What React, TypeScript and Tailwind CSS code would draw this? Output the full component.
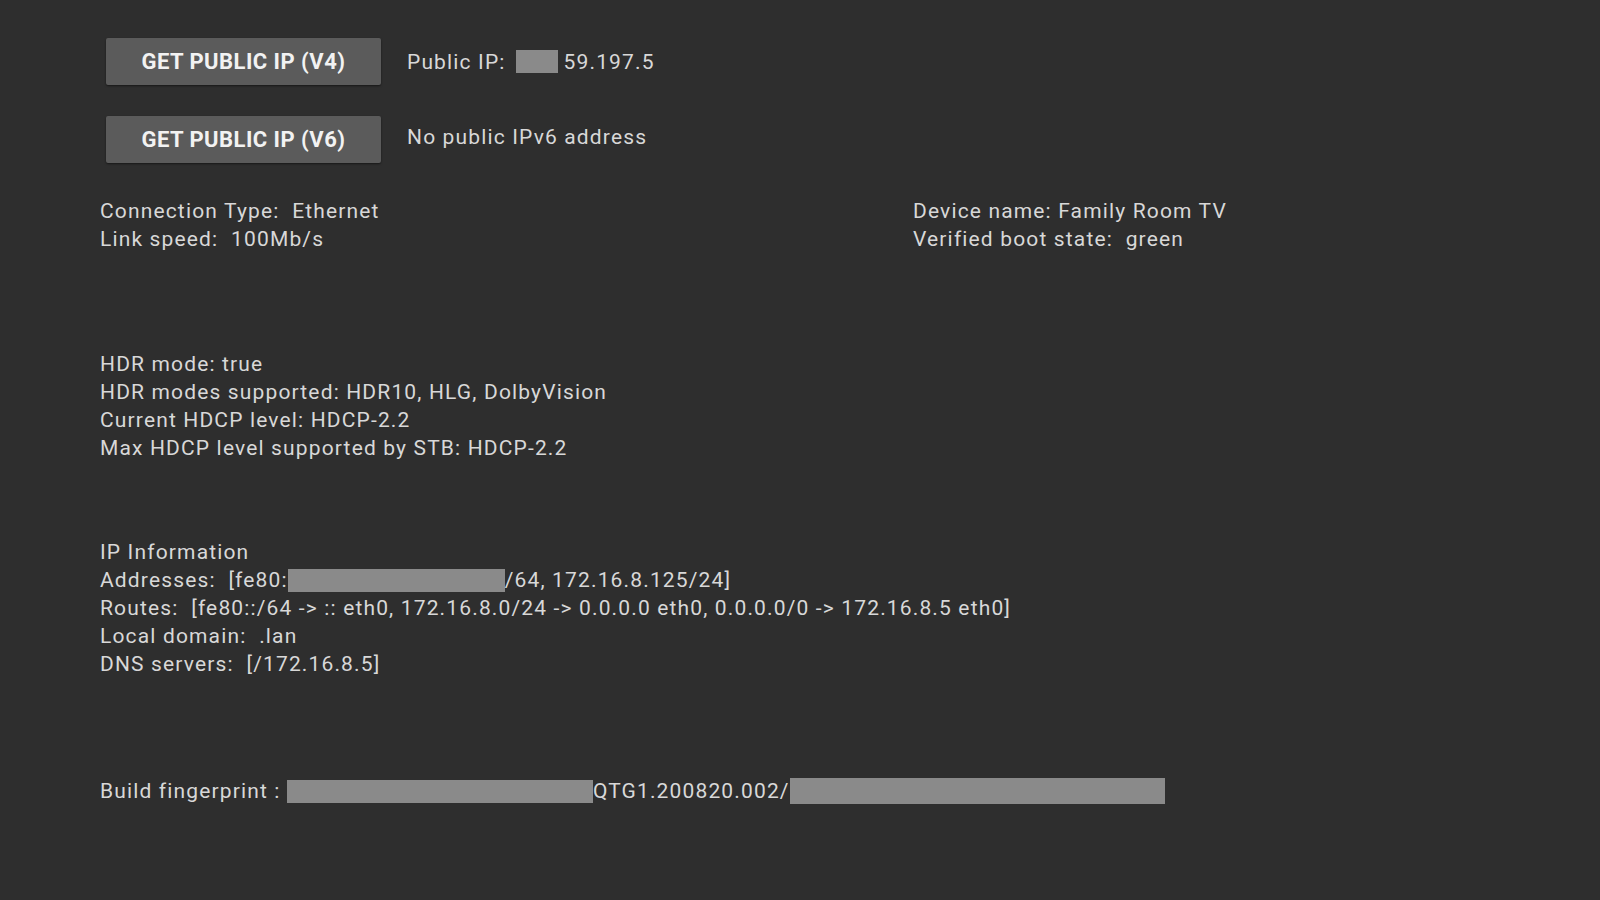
import React from "react";

const Redact: React.FC<{ className: string }> = ({ className }) => (
  <span className={`inline-block bg-[#8a8a8a] align-middle ${className}`} />
);

const IpButton: React.FC<{ label: string }> = ({ label }) => (
  <button className="ml-[6px] w-[275px] h-[47px] bg-[#5b5b5b] rounded-[2px] shadow-[0_1px_2px_rgba(0,0,0,0.5)] text-[#f2f2f2] text-[22px] font-bold tracking-[0.45px]">
    {label}
  </button>
);

export default function App() {
  return (
    <div className="w-[1600px] h-[900px] bg-[#2e2e2e] text-[#d8d8d8] font-['Roboto',sans-serif] text-[21px] tracking-[1.15px] leading-[28px] pl-[100px] pt-[38px] overflow-hidden">
      <div className="flex items-center gap-[26px]">
        <IpButton label="GET PUBLIC IP (V4)" />
        <div className="flex items-center">
          <span>Public IP:</span>
          <Redact className="w-[42px] h-[23px] ml-[10px] mr-[6px]" />
          <span>59.197.5</span>
        </div>
      </div>
      <div className="flex items-center gap-[26px] mt-[31px]">
        <IpButton label="GET PUBLIC IP (V6)" />
        <span className="-mt-[5px]">No public IPv6 address</span>
      </div>

      <div className="grid grid-cols-[813px_1fr] mt-[34px]">
        <div>
          <div>Connection Type:&nbsp; Ethernet</div>
          <div>Link speed:&nbsp; 100Mb/s</div>
        </div>
        <div>
          <div>Device name: Family Room TV</div>
          <div>Verified boot state:&nbsp; green</div>
        </div>
      </div>

      <div className="mt-[97px]">
        <div>HDR mode: true</div>
        <div>HDR modes supported: HDR10, HLG, DolbyVision</div>
        <div>Current HDCP level: HDCP-2.2</div>
        <div>Max HDCP level supported by STB: HDCP-2.2</div>
      </div>

      <div className="mt-[76px]">
        <div>IP Information</div>
        <div className="flex items-center">
          <span>Addresses:&nbsp; [fe80:</span>
          <Redact className="w-[217px] h-[23px]" />
          <span>/64, 172.16.8.125/24]</span>
        </div>
        <div>Routes:&nbsp; [fe80::/64 -&gt; :: eth0, 172.16.8.0/24 -&gt; 0.0.0.0 eth0, 0.0.0.0/0 -&gt; 172.16.8.5 eth0]</div>
        <div>Local domain:&nbsp; .lan</div>
        <div>DNS servers:&nbsp; [/172.16.8.5]</div>
      </div>

      <div className="mt-[99px] flex items-center">
        <span>Build fingerprint :&nbsp;</span>
        <Redact className="w-[306px] h-[23px]" />
        <span>QTG1.200820.002/</span>
        <Redact className="w-[375px] h-[26px]" />
      </div>
    </div>
  );
}
